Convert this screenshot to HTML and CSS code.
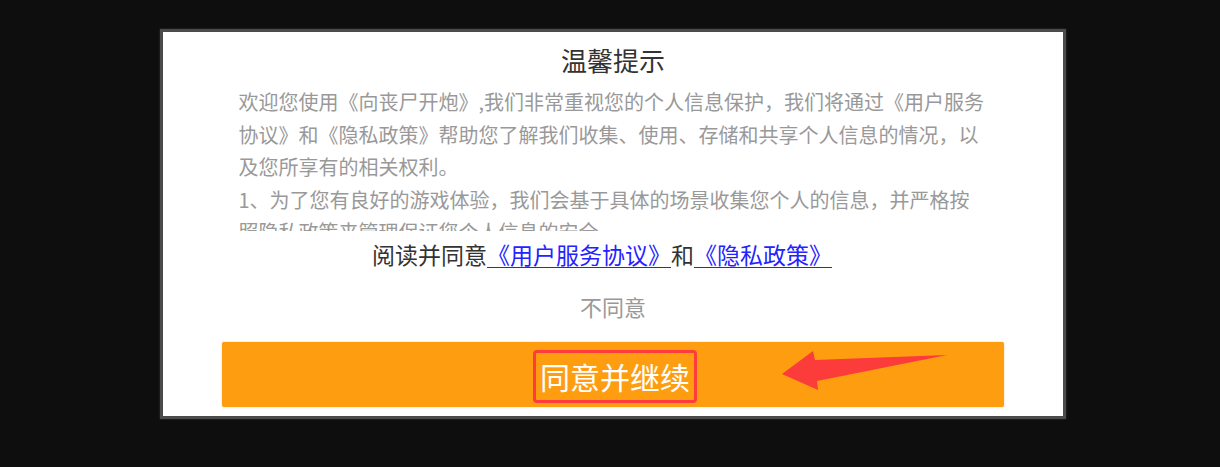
FILE: index.html
```html
<!DOCTYPE html>
<html lang="zh-CN">
<head>
<meta charset="utf-8">
<title>温馨提示</title>
<link rel="stylesheet" href="styles.css">
</head>
<body>
<div class="stage">
  <div class="dialog">
    <h1 class="title">温馨提示</h1>
    <div class="content">
      <p>欢迎您使用《向丧尸开炮》,我们非常重视您的个人信息保护，我们将通过《用户服务协议》和《隐私政策》帮助您了解我们收集、使用、存储和共享个人信息的情况，以及您所享有的相关权利。</p>
      <p>1、为了您有良好的游戏体验，我们会基于具体的场景收集您个人的信息，并严格按照隐私政策来管理保证您个人信息的安全。</p>
      <p>2、您可以查阅、更正、删除您的个人信息，我们也提供注销账号的渠道。</p>
    </div>
    <div class="agree-line">阅读并同意<a class="link" href="#">《用户服务协议》</a>和<a class="link" href="#">《隐私政策》</a></div>
    <div class="disagree">不同意</div>
    <div class="confirm">
      <span class="confirm-label">同意并继续</span>
      <svg class="arrow" width="740" height="65" viewBox="0 0 740 65">
        <polygon points="560,32 591,9 593,18 725,13 595,39 596,48" fill="#fc3b3b"/>
      </svg>
    </div>
  </div>
</div>
</body>
</html>
```

FILE: styles.css
```css
html, body {
  margin: 0;
  padding: 0;
}
body {
  background: #0e0e0e;
  height: 467px;
  overflow: hidden;
  font-family: "Noto Sans CJK SC", "Noto Sans", sans-serif;
}
.stage {
  padding-top: 29px;
  padding-left: 160px;
}
.dialog {
  width: 900px;
  height: 384px;
  background: #ffffff;
  border: 3px solid #4b4b4b;
  box-shadow: 0 0 2px rgba(80, 80, 80, 0.6);
  display: flex;
  flex-direction: column;
  align-items: center;
}
.title {
  margin: 10px 0 0;
  font-size: 26px;
  font-weight: 400;
  line-height: 36px;
  color: #333333;
}
.content {
  margin-top: 8px;
  width: 749px;
  height: 145px;
  overflow: hidden;
  font-size: 20px;
  line-height: 32.5px;
  color: #999999;
}
.content p {
  margin: 0;
}
.agree-line {
  margin-top: 7px;
  padding-right: 22px;
  font-size: 23px;
  line-height: 32px;
  color: #333333;
}
.link {
  color: #2323ff;
  text-decoration: underline;
  text-decoration-thickness: 1px;
  text-underline-offset: 3px;
}
.disagree {
  margin-top: 21px;
  font-size: 22px;
  line-height: 30px;
  color: #999999;
}
.confirm {
  position: relative;
  margin-top: 21px;
  width: 782px;
  height: 65px;
  background: #ff9d11;
  border-radius: 2px;
  box-shadow: 0 0 1.5px rgba(255, 170, 60, 0.8);
  display: flex;
  align-items: center;
  justify-content: center;
}
.confirm-label {
  margin-top: 4px;
  margin-left: 4px;
  padding: 3px 4px;
  border: 3px solid #ff3b3b;
  border-radius: 4px;
  font-size: 30px;
  line-height: 41px;
  color: #ffffff;
}
.arrow {
  position: absolute;
  left: 0;
  top: 0;
}
```
